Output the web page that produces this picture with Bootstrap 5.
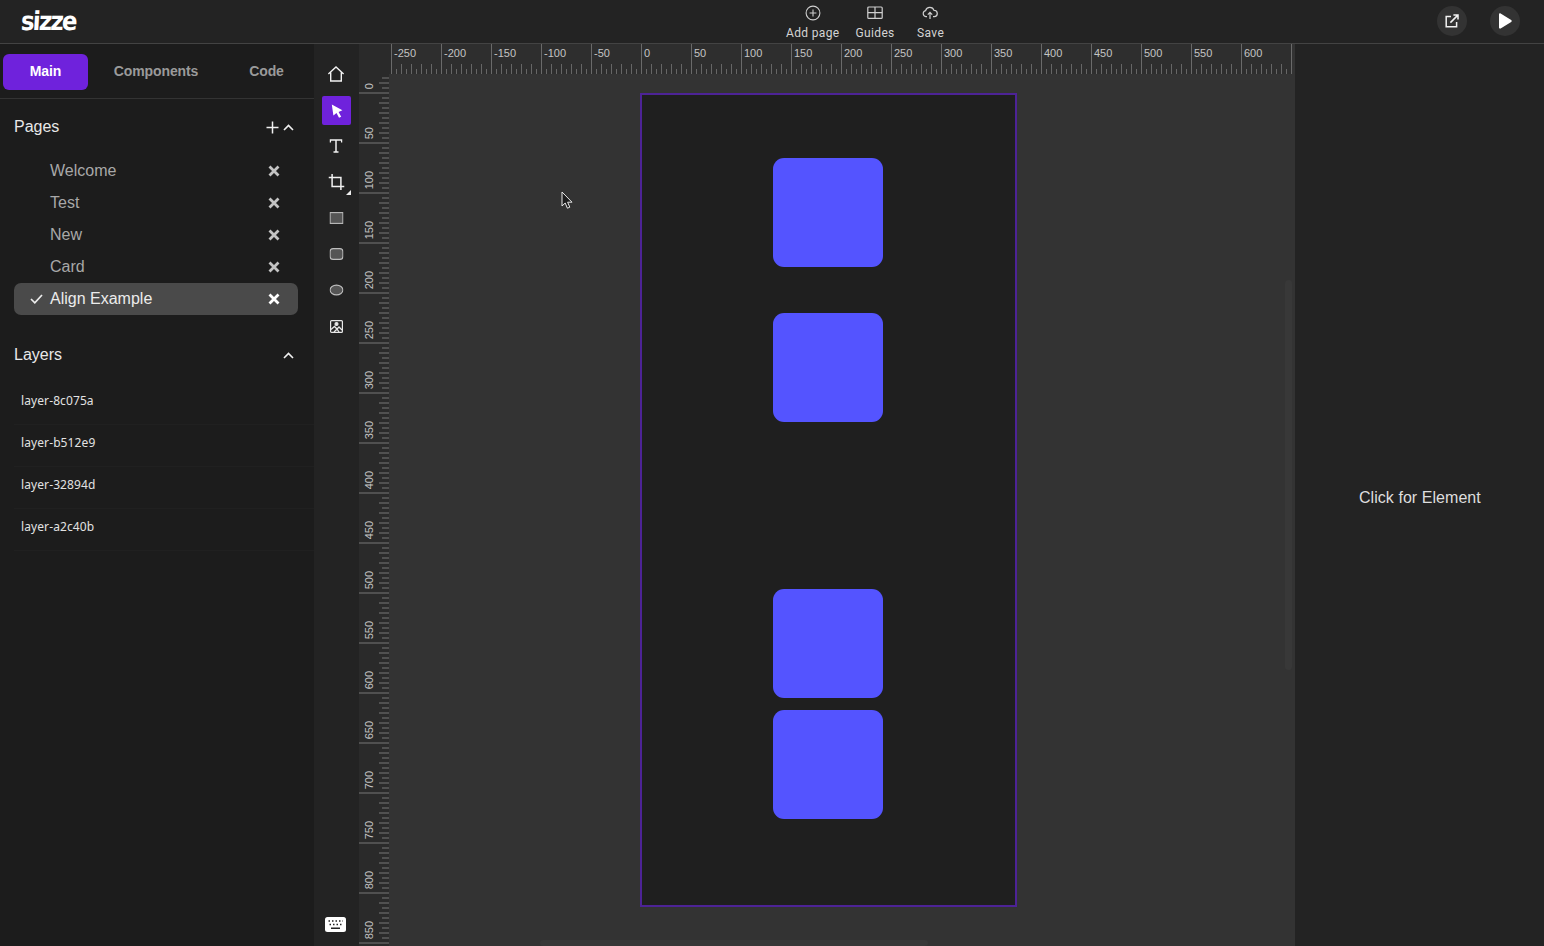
<!DOCTYPE html>
<html lang="en">
<head>
    <meta charset="UTF-8">
    <title>Sizze</title>
    <link href="https://cdn.jsdelivr.net/npm/bootstrap@5.3.0/dist/css/bootstrap.min.css" rel="stylesheet">
    <style>
        html, body { height: 100%; }
        body {
            background: #232323;
            color: #e6e6e6;
            font-family: "Liberation Sans", Arial, sans-serif;
            overflow: hidden;
        }
        button { background: none; border: 0; padding: 0; color: inherit; }
        svg { display: block; }

        /* top bar */
        .top-bar { height: 44px; border-bottom: 1px solid #434343; background: #232323; position: relative; }
        .logo-text {
            position: absolute; left: 21px; top: 6px;
            font-family: "DejaVu Sans", sans-serif; font-weight: 700; font-size: 26px; line-height: 30px;
            letter-spacing: -2px; color: #fff; transform: scaleX(.88) skewX(-4deg); transform-origin: left center;
        }
        .top-actions { margin-left: 786px; gap: 16px; }
        .top-action {
            font-family: Roboto, sans-serif; font-size: 12px; line-height: 14px; letter-spacing: .35px; color: #d4d4d4;
            display: flex; flex-direction: column; align-items: center; padding-top: 5px;
        }
        .top-action svg { margin-bottom: 5px; }
        .save-action { width: 40px; }
        .save-action svg { transform: translateX(-1px); }
        .round-btn { width: 30px; height: 30px; border-radius: 50%; background: #333; display: flex; align-items: center; justify-content: center; }
        .round-btns { position: absolute; left: 1437px; top: 6px; gap: 23px; }

        /* left panel */
        .main-area { height: 902px; }
        .side-panel { width: 314px; flex: none; background: #1c1c1c; }
        .tab-strip { height: 55px; border-bottom: 1px solid #333; padding: 10px 0 8px 3px; }
        .tab-btn { height: 36px; padding-bottom: 2px; font-size: 14px; font-weight: 700; letter-spacing: -.1px; color: #9a9a9a; border-radius: 6px; }
        .tab-btn.is-on { background: #6f22dc; color: #fff; width: 85px; }
        .tab-mid { width: 136px; }
        .tab-end { width: 85px; }
        .panel-head { height: 56px; padding: 0 20px 0 14px; font-size: 16px; color: #e8e8e8; }
        .pages-list { padding: 0 16px 0 14px; margin-bottom: 12px; }
        .page-item { height: 32px; font-size: 16px; color: #a8a8a8; border-radius: 7px; }
        .page-item.is-on { background: #4a4a4a; color: #ececec; }
        .page-mark { width: 36px; flex: none; display: flex; justify-content: center; padding-left: 8px; }
        .page-close { margin-left: auto; margin-right: 18px; color: #c4c4c4; }
        .layer-item {
            height: 42px; margin-left: 14px; padding-left: 7px; line-height: 36px; letter-spacing: .1px;
            font-family: "Noto Sans", sans-serif; font-size: 12px; color: #e2e2e2; border-bottom: 1px solid #202020;
        }

        /* tools */
        .tool-rail { width: 45px; flex: none; background: #232323; padding: 16px 0 6px 8px; gap: 7px; }
        .tool-btn { width: 29px; height: 29px; border-radius: 2px; display: flex; align-items: center; justify-content: center; position: relative; color: #eee; }
        .tool-btn.is-on { background: #6f22dc; }
        .tool-glyph { transform: translate(-.5px, -1px); }
        .key-glyph { transform: translate(-1px, -1px); }
        .tool-corner { position: absolute; right: 0; bottom: 2px; width: 0; height: 0; border-left: 5px solid transparent; border-bottom: 5px solid #eee; }

        /* stage */
        .stage { width: 936px; flex: none; background: #333; position: relative; overflow: hidden; }
        .ruler-top {
            height: 30px; background: #2e2e2e; padding-left: 32px; width: 933px;
        }
        .ruler-corner { position: absolute; left: 0; top: 0; width: 32px; height: 30px; background: #2a2a2a; }
        .h-cell {
            width: 50px; flex: none; height: 30px; box-sizing: border-box; border-left: 1px solid #6a6a6a;
            padding: 3px 0 0 2px; font-size: 11px; line-height: 13px; color: #c4c4c4;
            background-image:
                repeating-linear-gradient(to right, transparent 0 4px, #666 4px 5px, transparent 5px 9px, #666 9px 10px),
                repeating-linear-gradient(to right, transparent 0 9px, #666 9px 10px);
            background-repeat: no-repeat;
            background-size: 100% 5px, 100% 10px;
            background-position: bottom left;
        }
        .h-end { width: 1px; height: 30px; background: #6a6a6a; flex: none; }
        .ruler-left { position: absolute; left: 0; top: 30px; width: 30px; height: 872px; background: #2a2a2a; }
        .v-cell {
            height: 50px; box-sizing: border-box; border-bottom: 2px solid #505050; position: relative;
            background-image:
                repeating-linear-gradient(to top, transparent 0 3px, #505050 3px 5px, transparent 5px 8px, #505050 8px 10px),
                repeating-linear-gradient(to top, transparent 0 8px, #505050 8px 10px);
            background-repeat: no-repeat;
            background-size: 7px 100%, 10px 100%;
            background-position: right bottom;
        }
        .v-cell.first { height: 20px; }
        .v-label {
            position: absolute; left: 4px; bottom: 3px; writing-mode: vertical-rl; transform: rotate(180deg);
            font-size: 11px; line-height: 13px; color: #c4c4c4;
        }

        /* artboard: free canvas, coordinates are the content */
        .art-frame { position: absolute; left: 281px; top: 49px; width: 377px; height: 814px; background: #1f1f1f; border: 2px solid #4d2396; }
        .art-block { position: absolute; left: 131px; width: 110px; height: 109px; background: #5454ff; border-radius: 11px; }
        .scroll-v { position: absolute; left: 926px; top: 236px; width: 7px; height: 390px; background: #383838; border-radius: 4px; }
        .scroll-h { position: absolute; left: 181px; top: 896px; width: 388px; height: 6px; background: #383838; border-radius: 4px; }
        .mouse-pointer { position: absolute; left: 202px; top: 147px; }

        .right-panel { flex: 1 1 auto; background: #232323; font-size: 16px; letter-spacing: .05px; color: #dedede; padding-top: 444px; padding-left: 64px; line-height: 20px; }
    </style>
</head>
<body>

    <!-- top bar -->
    <header class="top-bar d-flex">
        <span class="logo-text">sizze</span>
        <div class="top-actions d-flex">
            <button class="top-action">
                <svg width="16" height="16" viewBox="0 0 16 16" fill="none" stroke="#cfcfcf" stroke-width="1.1"><circle cx="8" cy="8" r="6.9"/><path d="M8 4.6v6.8M4.6 8h6.8"/></svg>
                Add page
            </button>
            <button class="top-action">
                <svg width="16" height="16" viewBox="0 0 16 16" fill="none" stroke="#cfcfcf" stroke-width="1.2"><rect x=".8" y="2" width="14.4" height="11.4" rx="1"/><path d="M8 2v11.4M.8 7.700h14.400"/></svg>
                Guides
            </button>
            <button class="top-action save-action">
                <svg width="16" height="16" viewBox="0 0 16 16" fill="none" stroke="#cfcfcf" stroke-width="1.2"><path d="M5 11.600H3.800A3 3 0 0 1 3.600 5.700 4.400 4.400 0 0 1 12 5.400a3.100 3.100 0 0 1 .3 6.200H11"/><path d="M8 14V7.600M5.800 9.600 8 7.400l2.200 2.200"/></svg>
                Save
            </button>
        </div>
        <div class="round-btns d-flex">
            <button class="round-btn">
                <svg width="14" height="14" viewBox="0 0 14 14" fill="none" stroke="#f2f2f2" stroke-width="1.500"><path d="M6 2.400H1.200v10.400h10.400V8"/><path d="M5.400 8.600 12.600 1.400M8.400 1h4.600v4.600"/></svg>
            </button>
            <button class="round-btn">
                <svg width="14" height="16" viewBox="0 0 14 16"><path d="M1 1.400c0-.9.9-1.400 1.600-1l10.600 6.600c.7.4.7 1.500 0 2L2.600 15.600c-.7.4-1.600-.1-1.600-1z" fill="#fff"/></svg>
            </button>
        </div>
    </header>

    <div class="main-area d-flex">
        <!-- left panel -->
        <aside class="side-panel">
            <div class="tab-strip d-flex">
                <button class="tab-btn is-on">Main</button>
                <button class="tab-btn tab-mid">Components</button>
                <button class="tab-btn tab-end">Code</button>
            </div>

            <div class="panel-head d-flex align-items-center">
                <span>Pages</span>
                <svg class="ms-auto" width="13" height="13" viewBox="0 0 13 13" stroke="#f0f0f0" stroke-width="1.500"><path d="M6.500 .5v12M.5 6.500h12"/></svg>
                <svg class="ms-1" width="11" height="7" viewBox="0 0 11 7" fill="none" stroke="#f0f0f0" stroke-width="1.600"><path d="M1 6 5.500 1.500 10 6"/></svg>
            </div>
            <div class="pages-list" id="pages"></div>

            <div class="panel-head d-flex align-items-center">
                <span>Layers</span>
                <svg class="ms-auto" width="11" height="7" viewBox="0 0 11 7" fill="none" stroke="#f0f0f0" stroke-width="1.600"><path d="M1 6 5.500 1.500 10 6"/></svg>
            </div>
            <div>
                <div class="layer-item">layer-8c075a</div>
                <div class="layer-item">layer-b512e9</div>
                <div class="layer-item">layer-32894d</div>
                <div class="layer-item">layer-a2c40b</div>
            </div>
        </aside>

        <!-- tools -->
        <nav class="tool-rail d-flex flex-column">
            <button class="tool-btn">
                <svg class="tool-glyph" width="17" height="16" viewBox="0 0 17 16" fill="none" stroke="#f2f2f2" stroke-width="1.400"><path d="M.9 8 8.500 1l7.600 7M3.200 6.500V15h10.600V6.500"/></svg>
            </button>
            <button class="tool-btn is-on">
                <svg width="12" height="14" viewBox="0 0 12 14"><path d="M.8.4 11.400 6.300 7.600 7.900 10.200 12.800 8 13.800 5.500 8.900 2.400 11.500z" fill="#fff"/></svg>
            </button>
            <button class="tool-btn">
                <svg class="tool-glyph" width="13" height="14" viewBox="0 0 13 14" fill="none" stroke="#f2f2f2" stroke-width="1.500"><path d="M.8 3.600V1h11.400v2.600M6.500 1v12M4 13h5"/></svg>
            </button>
            <button class="tool-btn">
                <svg class="tool-glyph" width="16" height="16" viewBox="0 0 16 16" fill="none" stroke="#f2f2f2" stroke-width="1.500"><path d="M3.600 0v12.400H16M0 3.600h12.400V16"/></svg>
                <span class="tool-corner"></span>
            </button>
            <button class="tool-btn">
                <svg class="tool-glyph" width="14" height="12" viewBox="0 0 14 12"><rect x=".6" y=".6" width="12.800" height="10.800" fill="#555" stroke="#bdbdbd" stroke-width="1.100"/></svg>
            </button>
            <button class="tool-btn">
                <svg class="tool-glyph" width="14" height="12" viewBox="0 0 14 12"><rect x=".6" y=".6" width="12.800" height="10.800" rx="3" fill="#555" stroke="#bdbdbd" stroke-width="1.100"/></svg>
            </button>
            <button class="tool-btn">
                <svg class="tool-glyph" width="14" height="12" viewBox="0 0 14 12"><ellipse cx="7" cy="6" rx="6.400" ry="4.900" fill="#555" stroke="#bdbdbd" stroke-width="1.100"/></svg>
            </button>
            <button class="tool-btn">
                <svg width="13" height="13" viewBox="0 0 13 13" fill="none" stroke="#e8e8e8" stroke-width="1.200"><rect x=".6" y=".6" width="11.800" height="11.800" rx="1"/><circle cx="6.500" cy="4" r="1.500" fill="#e8e8e8"/><path d="M1 9.500 4.500 6.500 7 9 9 7l3 3M4 12l3-3 2 3" stroke-width="1.300"/></svg>
            </button>
            <button class="tool-btn mt-auto">
                <svg class="key-glyph" width="21" height="15" viewBox="0 0 21 15"><rect width="21" height="15" rx="2.500" fill="#fff"/><path d="M3.500 4h1.500M7 4h1.500M10.500 4H12M14 4h1.500M17 4h.5M4.500 7.500H6M8 7.500h1.500M11.500 7.500H13M15 7.500h1.500M6 11.200h9" stroke="#232323" stroke-width="1.600"/></svg>
            </button>
        </nav>

        <!-- stage -->
        <main class="stage">
            <div class="ruler-top d-flex" id="rulerTop"></div>
            <div class="ruler-corner"></div>
            <div class="ruler-left" id="rulerLeft"></div>

            <div class="art-frame">
                <div class="art-block" style="top: 63px"></div>
                <div class="art-block" style="top: 218px"></div>
                <div class="art-block" style="top: 494px"></div>
                <div class="art-block" style="top: 615px"></div>
            </div>

            <div class="scroll-v"></div>
            <div class="scroll-h"></div>

            <svg class="mouse-pointer" width="12" height="19" viewBox="0 0 12 19"><path d="M1 1v14l3.200-3 2.200 5.200 2.400-1-2.200-5H11z" fill="#1c1c1c" stroke="#e8e8e8" stroke-width="1"/></svg>
        </main>

        <aside class="right-panel">Click for Element</aside>
    </div>

    <script src="https://cdn.jsdelivr.net/npm/bootstrap@5.3.0/dist/js/bootstrap.bundle.min.js"></script>
    <script>
        // page list
        const closeIcon = '<svg width="12" height="12" viewBox="0 0 12 12" stroke="currentColor" stroke-width="2.800"><path d="M1.500 1.500l9 9M10.500 1.500l-9 9"/></svg>';
        const checkIcon = '<svg width="13" height="10" viewBox="0 0 13 10" fill="none" stroke="#ececec" stroke-width="1.700"><path d="M1 5l3.800 3.800L12 1"/></svg>';
        const pages = ['Welcome', 'Test', 'New', 'Card', 'Align Example'];
        document.getElementById('pages').innerHTML = pages.map(function (name, i) {
            const on = i === pages.length - 1;
            return '<div class="page-item d-flex align-items-center' + (on ? ' is-on' : '') + '">' +
                '<span class="page-mark">' + (on ? checkIcon : '') + '</span>' +
                '<span>' + name + '</span>' +
                '<span class="page-close"' + (on ? ' style="color:#fff"' : '') + '>' + closeIcon + '</span></div>';
        }).join('');

        // rulers
        let topCells = '';
        for (let n = -250; n <= 600; n += 50) topCells += '<div class="h-cell">' + n + '</div>';
        document.getElementById('rulerTop').innerHTML = topCells + '<div class="h-end"></div>';

        let leftCells = '';
        for (let n = 0; n <= 850; n += 50) {
            leftCells += '<div class="v-cell' + (n === 0 ? ' first' : '') + '"><span class="v-label">' + n + '</span></div>';
        }
        document.getElementById('rulerLeft').innerHTML = leftCells;
    </script>
</body>
</html>
